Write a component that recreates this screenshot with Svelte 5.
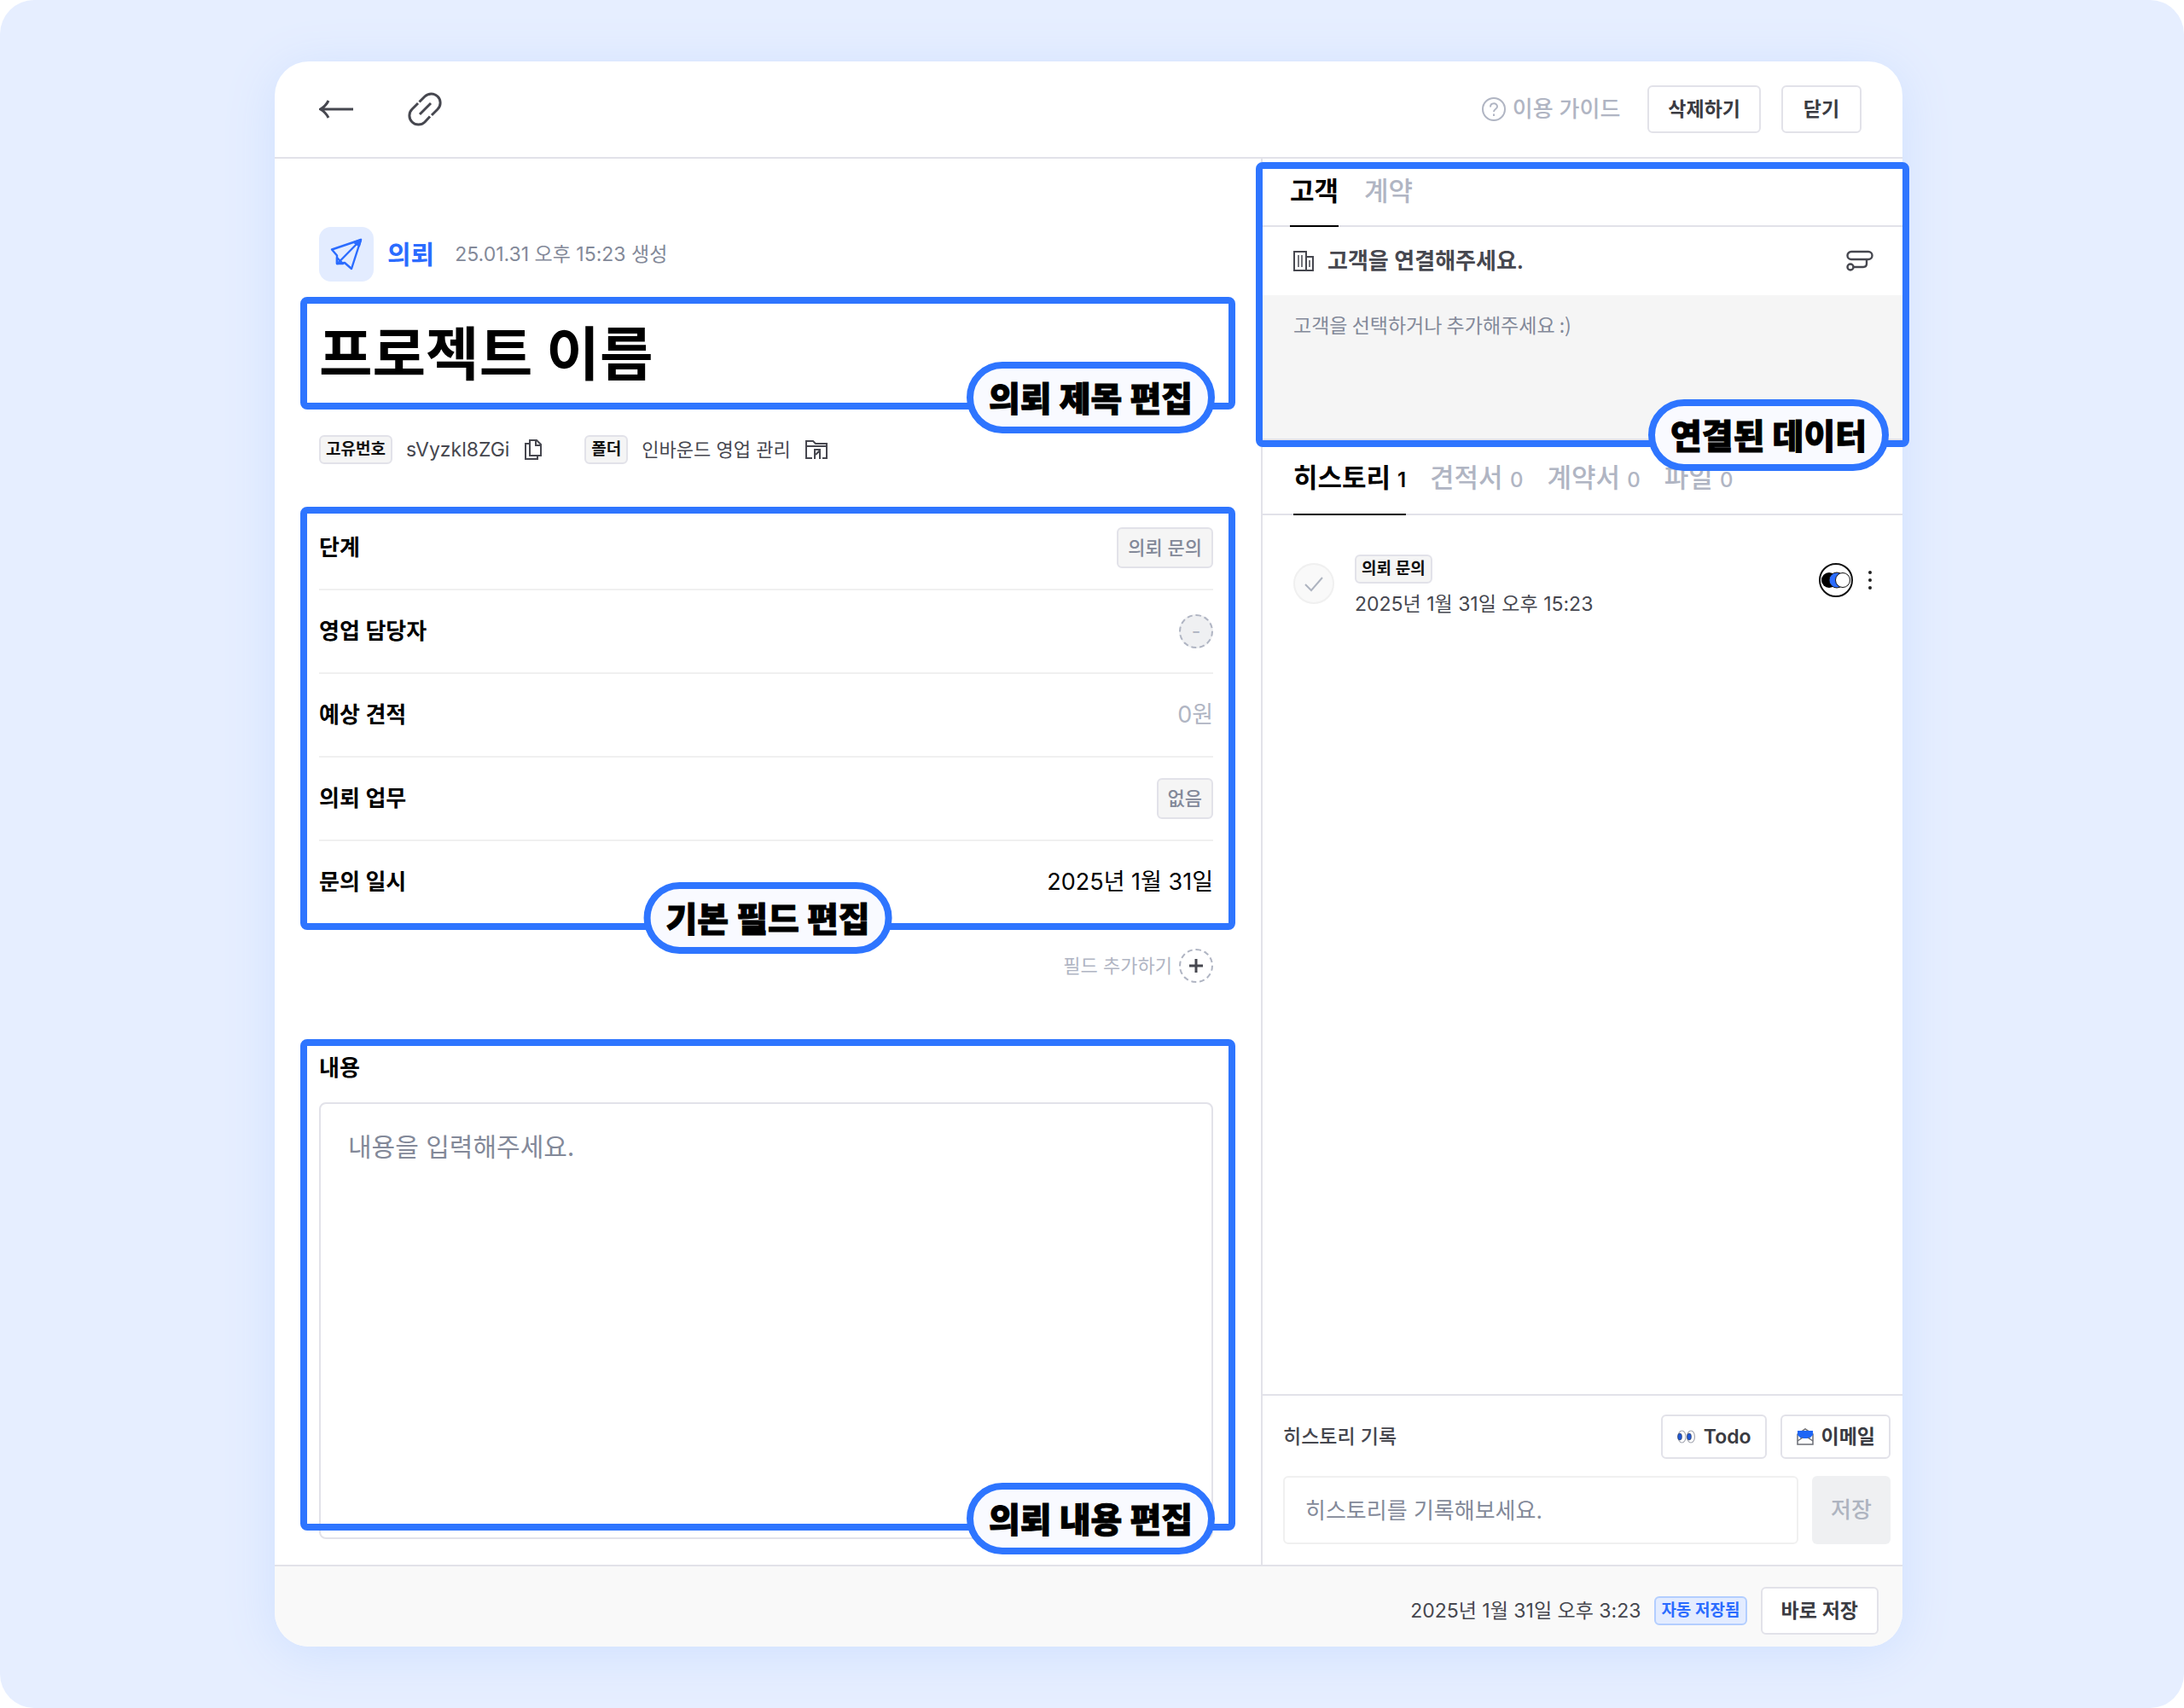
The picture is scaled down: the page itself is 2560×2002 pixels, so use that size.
<script lang="ts">
  let title = $state('프로젝트 이름');
  let inquiryDate = $state('2025년 1월 31일');
  let estimate = $state('');
  let body = $state('');
  let note = $state('');

  let relationTab = $state('고객');
  let recordTab = $state('히스토리');

  const relationTabs = ['고객', '계약'];
  const recordTabs = [
    { name: '히스토리', count: 1 },
    { name: '견적서', count: 0 },
    { name: '계약서', count: 0 },
    { name: '파일', count: 0 },
  ];
  const history = [{ stage: '의뢰 문의', at: '2025년 1월 31일 오후 15:23' }];
</script>

<div class="stage">
  <div class="card">
    <header class="topbar">
      <button class="icon-btn" aria-label="뒤로">
        <svg width="40" height="40" viewBox="0 0 40 40" fill="none" stroke="#46474f" stroke-width="3">
          <path d="M40 20H2M11 10C9 14 6 17.500 1.500 20C6 22.500 9 26 11 30" />
        </svg>
      </button>
      <button class="icon-btn" aria-label="링크 복사">
        <svg width="40" height="40" viewBox="0 0 40 40" fill="none" stroke="#46474f" stroke-width="3">
          <path d="M13.500 11.500L20 5A10.400 10.400 0 0 1 35 20L28 27M26 28.500L20 35A10.400 10.400 0 0 1 5 20L12 13M14 26L27 13" />
        </svg>
      </button>
      <a class="guide" href="#guide">
        <svg width="28" height="28" viewBox="0 0 28 28" fill="none" stroke="#b0b5c3" stroke-width="2">
          <circle cx="14" cy="14" r="13" />
          <path d="M10 11.500C10 6 18 6 18 11C18 14 14 13.500 14 17M14 19.500V22" />
        </svg>
        이용 가이드
      </a>
      <button class="btn">삭제하기</button>
      <button class="btn">닫기</button>
    </header>

    <div class="columns">
      <main>
        <div class="kind">
          <span class="kind-icon">
            <svg width="64" height="64" viewBox="0 0 64 64" fill="none" stroke="#2b6cff" stroke-width="2.400" stroke-linejoin="round">
              <path d="M49 15L15 26.500L21 33.500V43L30 42L38 49Z" />
              <path d="M49 15L22 42.500M21 36V43H28Z" />
              <path d="M49 15L41 18L47 22Z" fill="#2b6cff" />
            </svg>
          </span>
          <strong>의뢰</strong>
          <span class="created">25.01.31 오후 15:23 생성</span>
        </div>

        <section class="title">
          <input aria-label="의뢰 제목" bind:value={title} />
          <div class="mark"><span>의뢰 제목 편집</span></div>
        </section>

        <div class="meta">
          <span class="tag">고유번호</span>
          <span class="meta-text">sVyzkl8ZGi</span>
          <button class="icon-btn" aria-label="고유번호 복사">
            <svg width="24" height="26" viewBox="0 0 24 26" fill="none" stroke="#46474f" stroke-width="2">
              <path d="M8 2H16L21 7V20H8Z M15 2V8H21 M8 6H3V24H17V20" />
            </svg>
          </button>
          <span class="tag folder">폴더</span>
          <span class="meta-text folder-name">인바운드 영업 관리</span>
          <button class="icon-btn" aria-label="폴더 이동">
            <svg width="28" height="26" viewBox="0 0 28 26" fill="none" stroke="#46474f" stroke-width="2">
              <path d="M9 23H2V3H10L13 6H26V23H21M2 9H26M12 24V13H18V24M13 19L18 14" />
            </svg>
          </button>
        </div>

        <section class="fields">
          <div class="field">
            <span class="label">단계</span>
            <button class="chip">의뢰 문의</button>
          </div>
          <div class="field">
            <span class="label">영업 담당자</span>
            <button class="round filled" aria-label="영업 담당자 선택">-</button>
          </div>
          <div class="field">
            <label class="label" for="estimate">예상 견적</label>
            <input id="estimate" placeholder="0원" bind:value={estimate} />
          </div>
          <div class="field">
            <span class="label">의뢰 업무</span>
            <button class="chip">없음</button>
          </div>
          <div class="field">
            <label class="label" for="inquiry-date">문의 일시</label>
            <input id="inquiry-date" bind:value={inquiryDate} />
          </div>
          <div class="mark center"><span>기본 필드 편집</span></div>
        </section>

        <div class="add-field">
          <span>필드 추가하기</span>
          <button class="round" aria-label="필드 추가하기">
            <svg width="16" height="16" viewBox="0 0 16 16" stroke="#46474f" stroke-width="3"><path d="M8 0V16M0 8H16" /></svg>
          </button>
        </div>

        <section class="content">
          <label class="label" for="body">내용</label>
          <textarea id="body" placeholder="내용을 입력해주세요." bind:value={body}></textarea>
          <div class="mark"><span>의뢰 내용 편집</span></div>
        </section>
      </main>

      <aside>
        <section class="relation">
          <div class="tabs">
            {#each relationTabs as name}
              <button class="tab" class:active={relationTab === name} onclick={() => (relationTab = name)}>{name}</button>
            {/each}
          </div>
          <div class="relation-head">
            <svg width="24" height="26" viewBox="0 0 24 26" fill="none" stroke="#46474f" stroke-width="2">
              <path d="M1 24V2H15V24ZM15 8H23V24H15" />
              <path d="M6 6V20M10 6V20M19 12V20" stroke-width="1.500" />
            </svg>
            <span>고객을 연결해주세요.</span>
            <button class="icon-btn" aria-label="고객 연결">
              <svg width="32" height="26" viewBox="0 0 32 26" fill="none" stroke="#46474f" stroke-width="2.400">
                <rect x="1.500" y="2" width="29" height="9" rx="4.500" />
                <circle cx="5" cy="20" r="3.500" />
                <path d="M24 11V16Q24 20 20 20H9" />
              </svg>
            </button>
          </div>
          <p class="relation-empty">고객을 선택하거나 추가해주세요 :)</p>
          <div class="mark"><span>연결된 데이터</span></div>
        </section>

        <div class="tabs records">
          {#each recordTabs as tab}
            <button class="tab" class:active={recordTab === tab.name} onclick={() => (recordTab = tab.name)}>
              {tab.name} <small>{tab.count}</small>
            </button>
          {/each}
        </div>

        <ul class="history">
          {#each history as item}
            <li>
              <span class="check">
                <svg width="48" height="48" viewBox="0 0 48 48" fill="none" stroke="#aeb4c0" stroke-width="2"><path d="M14 25L21 32L34 17" /></svg>
              </span>
              <div class="history-text">
                <span class="tag">{item.stage}</span>
                <time>{item.at}</time>
              </div>
              <svg class="avatar" width="40" height="40" viewBox="0 0 40 40">
                <circle cx="20" cy="20" r="19" fill="#fff" stroke="#111" stroke-width="2" />
                <circle cx="12" cy="20" r="9" fill="#000" />
                <circle cx="21" cy="20" r="9" fill="#2b6cff" stroke="#111" />
                <circle cx="28" cy="20" r="8.500" fill="#fff" stroke="#111" />
              </svg>
              <button class="icon-btn more" aria-label="더보기">
                <svg width="6" height="24" viewBox="0 0 6 24" fill="#222"><circle cx="3" cy="3" r="2" /><circle cx="3" cy="12" r="2" /><circle cx="3" cy="21" r="2" /></svg>
              </button>
            </li>
          {/each}
        </ul>

        <form class="composer" onsubmit={(e) => e.preventDefault()}>
          <div class="composer-row">
            <label for="note">히스토리 기록</label>
            <button type="button" class="btn small">
              <svg width="24" height="18" viewBox="0 0 24 18" fill="#fff" stroke="#a6a9b3" stroke-width="1.200">
                <ellipse cx="6.500" cy="9" rx="4.500" ry="7" /><ellipse cx="17" cy="9" rx="4.500" ry="7" />
                <ellipse cx="4" cy="9" rx="2.500" ry="4" fill="#1f57d6" stroke="#333" stroke-width="0.500" />
                <ellipse cx="15" cy="9" rx="2.500" ry="4" fill="#1f57d6" stroke="#333" stroke-width="0.500" />
              </svg>
              Todo
            </button>
            <button type="button" class="btn small">
              <svg width="22" height="22" viewBox="0 0 22 22" fill="none" stroke="#6b6d75" stroke-width="1.500">
                <path d="M2 8L11 2L20 8V20H2Z" fill="#fff" />
                <path d="M2 4H20V9L16 13H6L2 9Z" fill="#1f66f5" stroke="none" />
                <path d="M2 16L8 12M20 16L14 12" />
              </svg>
              이메일
            </button>
          </div>
          <div class="composer-row">
            <input id="note" placeholder="히스토리를 기록해보세요." bind:value={note} />
            <button class="save" disabled={!note}>저장</button>
          </div>
        </form>
      </aside>
    </div>

    <footer>
      <span class="saved-at">2025년 1월 31일 오후 3:23</span>
      <span class="tag blue">자동 저장됨</span>
      <button class="btn">바로 저장</button>
    </footer>
  </div>
</div>

<style>
  :global(body) { background: #fff; }
  .stage, .stage * { box-sizing: border-box; }
  .stage {
    min-height: 100vh;
    padding: 72px 330px 72px 322px;
    border-radius: 40px;
    background: #e6eeff;
    color: #000;
    font: 400 23px/32px Inter, "Noto Sans CJK KR", sans-serif;
  }
  button, input, textarea { margin: 0; padding: 0; border: 0; background: none; color: inherit; font: inherit; outline: none; }
  button { cursor: pointer; white-space: nowrap; }
  svg { display: block; flex: none; }
  ::placeholder { color: #838999; opacity: 1; }

  .card { border-radius: 40px; background: #fff; box-shadow: 0 8px 60px #cfe0ff; }

  .topbar { display: flex; align-items: center; height: 114px; padding: 0 48px 0 52px; border-bottom: 2px solid #e2e2e9; }
  .icon-btn { display: flex; align-items: center; justify-content: center; }
  .topbar .icon-btn { margin-right: 64px; }
  .guide { display: flex; align-items: center; gap: 8px; margin-left: auto; margin-right: 8px; color: #b0b5c3; font-size: 26px; font-weight: 500; text-decoration: none; }
  .btn { min-width: 94px; height: 56px; margin-left: 24px; padding: 0 22px; border: 2px solid #e2e2e9; border-radius: 6px; background: #fff; color: #3a3b42; font-weight: 600; }
  .btn.small { display: flex; align-items: center; gap: 8px; height: 52px; margin: 0; padding: 0 16px; }

  .columns { display: grid; grid-template-columns: minmax(0, 1fr) 752px; }
  main { padding: 80px 56px 30px 52px; }
  aside { display: flex; flex-direction: column; border-left: 2px solid #e2e2e9; }

  /* callout frame and its pill, drawn over a section */
  .mark { position: absolute; inset: 0 -26px 0 -22px; border: 8px solid #2e75ff; border-radius: 8px; pointer-events: none; }
  .mark span {
    position: absolute;
    right: 16px;
    bottom: -36px;
    height: 84px;
    padding: 0 18px;
    border: 8px solid #2e75ff;
    border-radius: 42px;
    background: #f9faff;
    font: 900 40px/66px "Noto Sans CJK KR", sans-serif;
    -webkit-text-stroke: 1px #000;
    white-space: nowrap;
  }
  .mark.center span { right: 50%; transform: translateX(50%); }

  .kind { display: flex; align-items: center; }
  .kind-icon { width: 64px; height: 64px; border-radius: 14px; background: #e3ecff; }
  .kind strong { margin: 0 24px 0 16px; color: #2b6cff; font-size: 30px; font-weight: 600; }
  .created { color: #838999; }

  .title { position: relative; height: 132px; margin-top: 18px; }
  .title input { width: 100%; height: 124px; font-size: 68px; font-weight: 700; }

  .meta { display: flex; align-items: center; height: 34px; margin-top: 30px; color: #46474f; }
  .meta-text { margin: 0 16px; }
  .folder-name { font-size: 22px; }
  .tag { height: 34px; padding: 0 6px; border: 2px solid #e2e2e9; border-radius: 6px; background: #f5f5f5; color: #111; font-size: 19px; line-height: 30px; font-weight: 600; white-space: nowrap; }
  .tag.folder { margin-left: 48px; }
  .tag.blue { margin: 0 0 0 16px; border-color: #b3ceff; background: #e3ecff; color: #2b6cff; }

  .fields { position: relative; margin-top: 50px; }
  .fields .mark { bottom: -8px; }
  .field { display: flex; align-items: center; justify-content: space-between; height: 98px; border-bottom: 2px solid #f0f0f0; }
  .field:nth-of-type(5) { height: 96px; border-bottom: 0; }
  .field input { flex: 1; min-width: 0; text-align: right; font-size: 27px; }
  .field ::placeholder { color: #b0b5c3; }
  .label { font-size: 26px; line-height: 36px; font-weight: 600; }
  .chip { height: 48px; padding: 0 11px; border: 2px solid #e2e2e9; border-radius: 6px; background: #f5f5f5; color: #838999; font-size: 22px; font-weight: 500; }
  .round { display: flex; align-items: center; justify-content: center; width: 40px; height: 40px; border: 2px dashed #b0b5c3; border-radius: 50%; }
  .round.filled { background: #eff0f2; color: #b0b5c3; }

  .add-field { display: flex; align-items: center; justify-content: flex-end; gap: 8px; margin-top: 30px; color: #b0b5c3; font-size: 22px; }

  .content { position: relative; margin-top: 66px; padding-top: 16px; }
  .content .label { display: block; margin-bottom: 22px; }
  .content textarea { display: block; width: 100%; height: 512px; padding: 30px 32px; border: 2px solid #e2e2e9; border-radius: 8px; font-size: 30px; line-height: 40px; resize: none; }
  .content .mark { bottom: 10px; }

  .tabs { display: flex; gap: 30px; height: 80px; padding: 0 32px; border-bottom: 2px solid #e2e2e9; }
  .tabs.records { gap: 28px; height: 88px; padding: 0 36px; }
  .tab { height: calc(100% + 2px); padding-bottom: 2px; border-bottom: 2px solid transparent; color: #b0b5c3; font-size: 31px; font-weight: 500; }
  .records .tab { padding: 4px 0 0; }
  .tab.active { border-bottom-color: #000; color: #000; font-weight: 600; }
  .tab small { font-size: 24px; }

  .relation { position: relative; }
  .relation .mark { inset: 4px -8px -8px -8px; }
  .relation-head { display: flex; align-items: center; gap: 16px; height: 80px; padding: 0 34px 0 36px; color: #46474f; font-size: 26px; font-weight: 600; }
  .relation-head .icon-btn { margin-left: auto; }
  .relation-empty { height: 170px; margin: 0; padding: 18px 36px; border-bottom: 2px solid #e2e2e9; background: #f5f5f5; color: #838999; font-family: "Noto Sans CJK KR", sans-serif; }

  .history { flex: 1; margin: 0; padding: 46px 34px 0 36px; list-style: none; }
  .history li { display: flex; align-items: flex-start; }
  .check { width: 48px; height: 48px; margin: 10px 24px 0 0; border-radius: 50%; background: #f9f9f9; box-shadow: inset 0 0 0 2px #f0f0f0; }
  .history-text { display: flex; flex: 1; flex-direction: column; align-items: flex-start; gap: 8px; color: #46474f; }
  .avatar, .more { margin-top: 10px; }
  .more { width: 40px; height: 40px; margin-right: -16px; }

  .composer { display: flex; flex-direction: column; gap: 20px; padding: 22px 14px 24px 24px; border-top: 2px solid #e2e2e9; }
  .composer-row { display: flex; align-items: center; gap: 16px; color: #46474f; }
  .composer label { flex: 1; font-weight: 500; }
  .composer input { flex: 1; min-width: 0; height: 80px; padding: 0 24px; border: 2px solid #f0f0f0; border-radius: 6px; font-size: 26px; }
  .save { width: 92px; height: 80px; border-radius: 6px; background: #eff0f2; color: #aeb4c0; font-size: 26px; font-weight: 500; }

  footer { display: flex; align-items: center; justify-content: flex-end; height: 96px; padding: 10px 28px 0 0; border-top: 2px solid #e2e2e9; border-radius: 0 0 40px 40px; background: #f9f9f9; color: #46474f; }
  footer .btn { margin-left: 16px; }
</style>
